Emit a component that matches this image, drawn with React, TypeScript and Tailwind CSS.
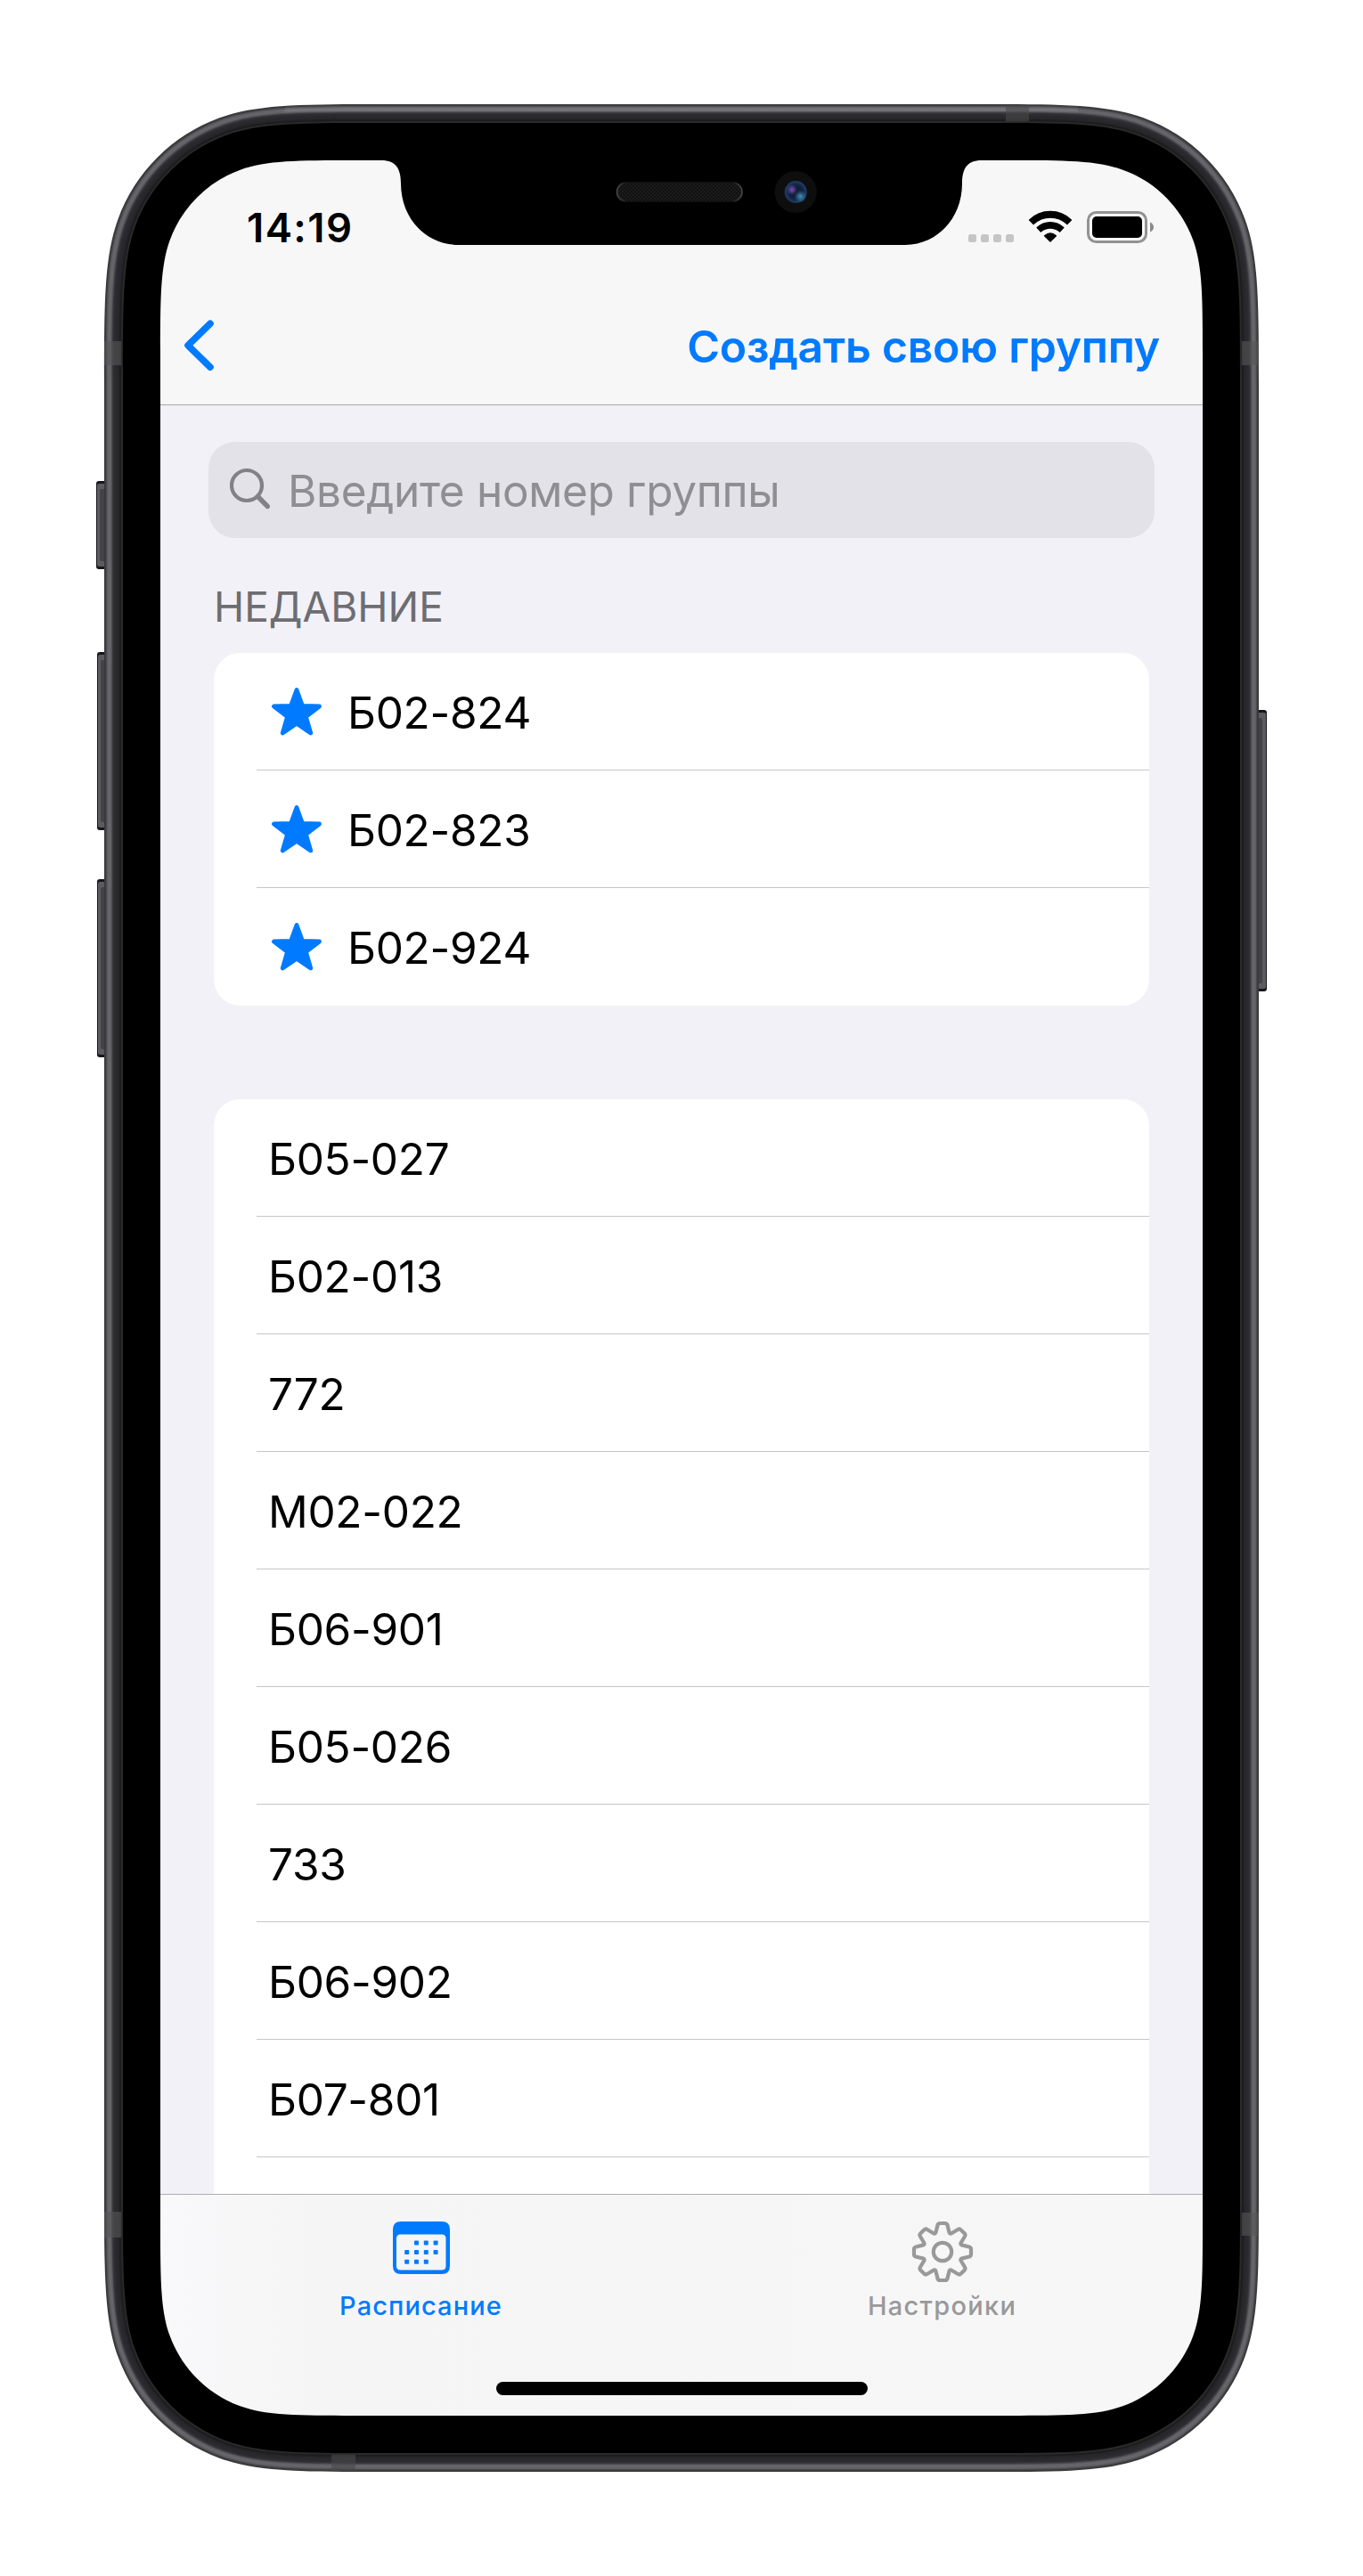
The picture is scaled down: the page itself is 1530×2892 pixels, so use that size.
import React from "react";

const recent = ["Б02-824", "Б02-823", "Б02-924"];
const groups = ["Б05-027", "Б02-013", "772", "М02-022", "Б06-901", "Б05-026", "733", "Б06-902", "Б07-801", ""];

/* Continuous-corner rectangle */
function squircle(x: number, y: number, w: number, h: number, r: number) {
  const X = x + w;
  const Y = y + h;
  const a = 1.52866 * r;
  const b = 1.08849 * r;
  const c = 0.837 * r;
  const d = 0.63149 * r;
  const e = 0.07491 * r;
  const f = 0.37282 * r;
  const g = 0.16906 * r;
  return [
    `M${x + a} ${y}H${X - a}`,
    `C${X - b} ${y} ${X - c} ${y} ${X - d} ${y + e}`,
    `C${X - f} ${y + g} ${X - g} ${y + f} ${X - e} ${y + d}`,
    `C${X} ${y + c} ${X} ${y + b} ${X} ${y + a}`,
    `V${Y - a}`,
    `C${X} ${Y - b} ${X} ${Y - c} ${X - e} ${Y - d}`,
    `C${X - g} ${Y - f} ${X - f} ${Y - g} ${X - d} ${Y - e}`,
    `C${X - c} ${Y} ${X - b} ${Y} ${X - a} ${Y}`,
    `H${x + a}`,
    `C${x + b} ${Y} ${x + c} ${Y} ${x + d} ${Y - e}`,
    `C${x + f} ${Y - g} ${x + g} ${Y - f} ${x + e} ${Y - d}`,
    `C${x} ${Y - c} ${x} ${Y - b} ${x} ${Y - a}`,
    `V${y + a}`,
    `C${x} ${y + b} ${x} ${y + c} ${x + e} ${y + d}`,
    `C${x + g} ${y + f} ${x + f} ${y + g} ${x + d} ${y + e}`,
    `C${x + c} ${y} ${x + b} ${y} ${x + a} ${y}Z`,
  ].join("");
}

/* Metal rim tones, from the outer edge inwards, one per pixel */
const rim = [
  "#38383a", "#3d3d40", "#4b4b4f", "#5c5c61", "#636368", "#66666b", "#66666b", "#5f5f64", "#4d4d52", "#39393e",
  "#303035", "#2c2c31", "#2a2a2f", "#29292e", "#28282d", "#27272c", "#242429", "#1f1f23", "#1c1c1f", "#2a2a28", "#2b2b29",
];

const screenHole = squircle(180, 180, 1170, 2532, 142);
const rimHole = squircle(148, 148, 1234, 2596, 174);

function SideButton({ x, y, w, h, right }: { x: number; y: number; w: number; h: number; right?: boolean }) {
  return (
    <g>
      <rect x={x} y={y} width={w + 4} height={h} rx="3" fill="#17171b" transform={right ? "translate(-4 0)" : undefined} />
      <rect x={right ? x - 4 : x + 1} y={y + 3} width={w + 3} height={h - 6} rx="2" fill="#5b5b60" />
      <rect x={right ? x - 4 : x + 4} y={y + 9} width={right ? 8 : w + 1} height={h - 18} rx="2" fill="#424247" />
    </g>
  );
}

function DeviceFrame() {
  return (
    <svg className="pointer-events-none absolute inset-0" width="1530" height="2892" viewBox="0 0 1530 2892">
      <defs>
        <radialGradient id="lens">
          <stop offset="0" stopColor="#0d1733" />
          <stop offset="0.6" stopColor="#12203f" />
          <stop offset="1" stopColor="#1f3f6c" />
        </radialGradient>
        <radialGradient id="violet">
          <stop offset="0" stopColor="#7a50b0" />
          <stop offset="1" stopColor="#7a50b0" stopOpacity="0" />
        </radialGradient>
        <radialGradient id="teal">
          <stop offset="0" stopColor="#4590b4" />
          <stop offset="1" stopColor="#3c85b0" stopOpacity="0" />
        </radialGradient>
        <pattern id="mesh" width="4" height="4" patternUnits="userSpaceOnUse">
          <rect width="4" height="4" fill="#101010" />
          <rect width="2" height="2" fill="#1c1c1c" />
          <rect x="2" y="2" width="2" height="2" fill="#1c1c1c" />
        </pattern>
        <linearGradient id="grille">
          <stop offset="0" stopColor="#484848" />
          <stop offset="0.08" stopColor="#141414" />
          <stop offset="0.92" stopColor="#141414" />
          <stop offset="1" stopColor="#484848" />
        </linearGradient>
        <linearGradient id="shine" x1="0" y1="0" x2="0" y2="1">
          <stop offset="0" stopColor="#fff" stopOpacity="0" />
          <stop offset="0.55" stopColor="#fff" stopOpacity="0.1" />
          <stop offset="1" stopColor="#fff" stopOpacity="0" />
        </linearGradient>
      </defs>
      <SideButton x={108} y={540} w={9} h={99} />
      <SideButton x={109} y={732} w={8} h={200} />
      <SideButton x={109} y={987} w={8} h={200} />
      <SideButton x={1413} y={797} w={9} h={316} right />
      {rim.map((color, i) => (
        <path
          key={i}
          fillRule="evenodd"
          fill={color}
          d={squircle(117 + i, 117 + i, 1296 - 2 * i, 2658 - 2 * i, 205 - i) + rimHole}
        />
      ))}
      <rect x="320" y="118" width="890" height="10" fill="url(#shine)" />
      <g fill="#565656" fillOpacity="0.6">
        <rect x="117" y="383" width="19" height="27" />
        <rect x="1394" y="383" width="19" height="27" />
        <rect x="1129" y="118" width="26" height="18" fill="#4a4a4a" />
        <rect x="117" y="2483" width="19" height="29" />
        <rect x="1394" y="2484" width="19" height="26" />
        <rect x="372" y="2756" width="27" height="18" fill="#4a4a4a" />
      </g>
      <path fillRule="evenodd" d={squircle(138, 138, 1254, 2616, 184) + screenHole} />
      <path d="M428 178V180C445 180 450 190 450 206C450 244 477 275 515 275H1015C1053 275 1080 244 1080 206C1080 190 1085 180 1102 180V178Z" />
      <rect x="692.5" y="205" width="140.5" height="21" rx="10.5" fill="url(#mesh)" stroke="url(#grille)" strokeWidth="1.6" />
      <circle cx="893.2" cy="215.5" r="23.5" fill="#0e0e0e" />
      <circle cx="893.2" cy="215.5" r="12.5" fill="url(#lens)" />
      <circle cx="889" cy="213" r="6" fill="url(#violet)" />
      <circle cx="898.5" cy="220.5" r="7" fill="url(#teal)" />
    </svg>
  );
}

function starPoints() {
  return Array.from({ length: 10 }, (_, i) => {
    const r = i % 2 ? 11 : 26.8;
    const t = (i * Math.PI) / 5;
    return `${28 + r * Math.sin(t)},${29.3 - r * Math.cos(t)}`;
  }).join(" ");
}

function Star() {
  return (
    <svg className="mr-[29px] shrink-0" width="56" height="55" viewBox="0 0 56 55">
      <polygon points={starPoints()} fill="#007aff" stroke="#007aff" strokeWidth="4.8" strokeLinejoin="round" />
    </svg>
  );
}

function gearPath() {
  const pts: { x: number; y: number; k: number }[] = [];
  for (let i = 0; i < 8; i++) {
    for (const [da, r, k] of [[-20.3, 22.3, 0.5], [-8.8, 32.4, 2.2], [8.8, 32.4, 2.2], [20.3, 22.3, 0.5]]) {
      const t = ((i * 45 + da) * Math.PI) / 180;
      pts.push({ x: 35 + r * Math.sin(t), y: 35 - r * Math.cos(t), k });
    }
  }
  const n = pts.length;
  const toward = (p: { x: number; y: number; k: number }, q: { x: number; y: number }) => {
    const l = Math.hypot(q.x - p.x, q.y - p.y);
    const m = Math.min(p.k, l / 2);
    return `${p.x + ((q.x - p.x) * m) / l} ${p.y + ((q.y - p.y) * m) / l}`;
  };
  return (
    pts
      .map((p, i) => {
        const a = toward(p, pts[(i + n - 1) % n]);
        const b = toward(p, pts[(i + 1) % n]);
        return `${i ? "L" : "M"}${a}Q${p.x} ${p.y} ${b}`;
      })
      .join("") + "Z"
  );
}

function Gear() {
  return (
    <svg width="70" height="70" viewBox="0 0 70 70" fill="none" stroke="#999" strokeWidth="4.2" strokeLinejoin="round">
      <path d={gearPath()} />
      <circle cx="35" cy="35" r="10.2" />
    </svg>
  );
}

function Calendar() {
  const dots = [[1, 0], [2, 0], [3, 0], [0, 1], [1, 1], [2, 1], [3, 1], [0, 2], [1, 2], [2, 2]];
  return (
    <svg width="64" height="59" viewBox="0 0 64 59" fill="#007aff">
      <path
        fillRule="evenodd"
        d="M9 0H55Q64 0 64 9V50Q64 59 55 59H9Q0 59 0 50V9Q0 0 9 0ZM8.500 14.500Q4 14.500 4 19V50Q4 54.500 8.500 54.500H55Q59.500 54.500 59.500 50V19Q59.500 14.500 55 14.500Z"
      />
      {dots.map(([c, r]) => (
        <rect key={`${c}${r}`} x={13.2 + c * 10.8} y={21.5 + r * 10.6} width="5" height="5" rx="0.8" />
      ))}
    </svg>
  );
}

function StatusIcons() {
  return (
    <svg width="210" height="38" viewBox="1087 235 210 38">
      <g fill="#c5c5c6">
        <rect x="1087" y="263" width="9" height="9" rx="2.500" />
        <rect x="1101" y="263" width="9" height="9" rx="2.500" />
        <rect x="1115" y="263" width="9" height="9" rx="2.500" />
        <rect x="1129" y="263" width="9" height="9" rx="2.500" />
      </g>
      <g stroke="#000" strokeLinejoin="round" strokeWidth="1.4">
        <path d="M1155.600 247A33.500 33.500 0 0 1 1202.400 247L1197.900 251.500A27.500 27.500 0 0 0 1160.100 251.500Z" />
        <path d="M1164.200 255.600A21.600 21.600 0 0 1 1193.800 255.600L1189.600 259.900A16.500 16.500 0 0 0 1168.400 259.900Z" />
        <path d="M1179 271L1172.600 264.700Q1179 259.400 1185.400 264.700Z" />
      </g>
      <rect x="1221.500" y="238.500" width="65" height="33" rx="9" fill="none" stroke="#929292" strokeWidth="3" />
      <rect x="1226" y="243" width="56" height="24" rx="5" />
      <path d="M1291 249.500Q1295 251.500 1295 255T1291 260.500Z" fill="#8a8a8a" />
    </svg>
  );
}

function Row({ label, star, last }: { label: string; star?: boolean; last?: boolean }) {
  return (
    <li className="pl-12">
      <div
        className={
          last
            ? "flex h-[132px] items-center pt-px pl-[17px]"
            : "flex h-[132px] items-center border-b border-[#c6c6c8] pt-0.5 pl-[17px]"
        }
      >
        {star && <Star />}
        <span className={star ? "text-[49.500px] leading-[60px] tracking-[-0.3px]" : "-ml-1 text-[49.500px] leading-[60px] tracking-[-0.3px]"}>
          {label}
        </span>
      </div>
    </li>
  );
}

export default function App() {
  return (
    <div className="relative h-[2892px] w-[1530px] overflow-hidden bg-white p-[180px] font-['Inter','Noto_Sans',sans-serif] text-black">
      <div className="flex h-[2532px] w-[1170px] flex-col overflow-hidden bg-[#f2f1f7]">
        <header className="h-[275px] shrink-0 border-b border-[#a9a9ab] bg-[#f7f7f7]">
          <div className="flex h-[150px] items-start justify-between pr-[53px] pl-[97px]">
            <time className="pt-[49px] text-[45.500px] leading-[54px] font-semibold tracking-[1.4px]">14:19</time>
            <div className="pt-[55px]">
              <StatusIcons />
            </div>
          </div>
          <div className="flex items-start justify-between pr-12 pl-[26px]">
            <button aria-label="Назад" className="pt-[29px]">
              <svg width="36" height="58" viewBox="0 0 36 58" fill="none" stroke="#007aff" strokeWidth="7.600" strokeLinecap="round" strokeLinejoin="round">
                <path d="M30 4.300L5 28.700L30 53.200" />
              </svg>
            </button>
            <button className="pt-[29px] text-[50px] leading-[60px] font-semibold tracking-[-0.3px] whitespace-nowrap text-[#007aff]">
              Создать свою группу
            </button>
          </div>
        </header>

        <main className="min-h-0 flex-1 overflow-hidden pt-[41px]">
          <div className="mx-[54px] flex h-[108px] items-center rounded-[30px] bg-[#e3e2e8] pl-6">
            <svg className="shrink-0" width="50" height="50" viewBox="0 0 50 50" fill="none" stroke="#818187" strokeLinecap="round">
              <circle cx="19" cy="20" r="17" strokeWidth="4.200" />
              <path d="M31.500 32.500L42.300 43.500" strokeWidth="5.400" />
            </svg>
            <span className="ml-[15px] pt-px text-[49.500px] leading-[60px] tracking-[-0.33px] text-[#8e8e93]">Введите номер группы</span>
          </div>
          <h2 className="h-[129px] pt-[52px] pl-[60px] text-[46px] leading-[50px] text-[#6d6d72]">НЕДАВНИЕ</h2>
          <ul className="mx-[60px] overflow-hidden rounded-[30px] bg-white">
            {recent.map((g, i) => (
              <Row key={g} label={g} star last={i === recent.length - 1} />
            ))}
          </ul>
          <ul className="mx-[60px] mt-[105px] overflow-hidden rounded-t-[30px] bg-white">
            {groups.map((g) => (
              <Row key={g} label={g} />
            ))}
          </ul>
        </main>

        <nav className="relative flex h-[249px] shrink-0 items-start border-t border-[#aeaeb0] bg-linear-to-r from-[#f9f9fb] via-[#f5f5f5] via-15% to-[#f7f7f8]">
          <div className="flex w-1/2 flex-col items-center pt-[30px] text-[#007aff]">
            <Calendar />
            <span className="mt-[18px] text-[29px] leading-9 font-medium tracking-[1.1px]">Расписание</span>
          </div>
          <div className="flex w-1/2 flex-col items-center pt-[29px] text-[#999999]">
            <Gear />
            <span className="mt-2 text-[29px] leading-9 font-medium tracking-[1.3px]">Настройки</span>
          </div>
          <div className="absolute bottom-[23px] left-[377px] h-[15px] w-[417px] rounded-full bg-black" />
        </nav>
      </div>
      <DeviceFrame />
    </div>
  );
}
